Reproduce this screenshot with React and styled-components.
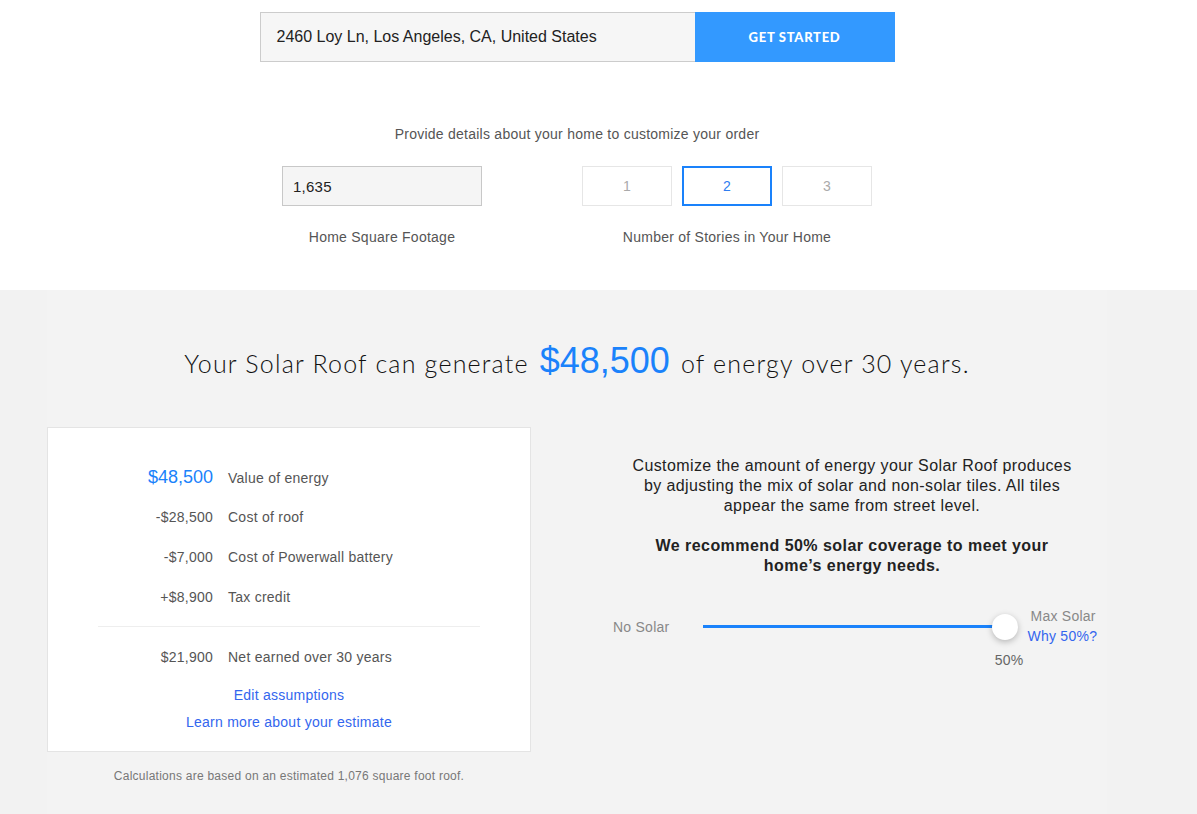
import React from "react";
import styled, { createGlobalStyle } from "styled-components";

const Global = createGlobalStyle`
  html, body { margin: 0; padding: 0; background: #f2f2f2; }
  body { font-family: "Liberation Sans", Arial, sans-serif; color: #333; letter-spacing: 0.25px; }
  * { box-sizing: border-box; }
`;

const Top = styled.section`
  background: #fff;
  height: 290px;
`;

const Frame = styled.div`
  width: 1154px;
  display: flex;
  flex-direction: column;
  align-items: center;
`;

const AddressBar = styled.div`
  display: flex;
  margin-top: 12px;
`;

const AddressInput = styled.div`
  width: 435px;
  height: 50px;
  background: #f6f6f6;
  border: 1px solid #cccccc;
  border-right: none;
  display: flex;
  align-items: center;
  padding-left: 16px;
  font-size: 16px;
  letter-spacing: 0;
  color: #222;
`;

const StartButton = styled.button`
  width: 200px;
  height: 50px;
  border: none;
  background: #3399ff;
  color: #fff;
  font-family: "Lato", sans-serif;
  font-weight: 900;
  font-size: 13px;
  letter-spacing: 0.7px;
`;

const Prompt = styled.p`
  margin: 64px 0 0;
  font-size: 14px;
  color: #555;
`;

const Fields = styled.div`
  display: flex;
  gap: 100px;
  margin-top: 24px;
`;

const Field = styled.div`
  display: flex;
  flex-direction: column;
  align-items: center;
`;

const FootageBox = styled.div`
  width: 200px;
  height: 40px;
  background: #f5f5f5;
  border: 1px solid #c8c8c8;
  display: flex;
  align-items: center;
  padding-left: 10px;
  font-size: 15px;
  color: #222;
`;

const Stories = styled.div`
  display: flex;
  gap: 10px;
`;

const Story = styled.div`
  width: 90px;
  height: 40px;
  background: #fff;
  border: ${(p) => (p.$active ? "2px solid #1a82fb" : "1px solid #e6e6e6")};
  color: ${(p) => (p.$active ? "#2f7df0" : "#aaa")};
  display: flex;
  align-items: center;
  justify-content: center;
  font-size: 14px;
`;

const FieldLabel = styled.div`
  margin-top: 23px;
  font-size: 14px;
  color: #555;
`;

const Bottom = styled.section`
  background: #f2f2f2;
  min-height: 524px;
`;

const Panel = styled.div`
  margin-left: 47px;
  width: 1060px;
  min-height: 524px;
  background: #f3f3f3;
  display: flex;
  flex-direction: column;
  align-items: center;
`;

const Headline = styled.h1`
  margin: 50px 0 0;
  font-family: "Lato", sans-serif;
  font-weight: 300;
  font-size: 25px;
  color: #111;
  display: flex;
  align-items: baseline;
  gap: 11px;
  letter-spacing: 1.2px;
`;

const Big = styled.span`
  font-family: "Liberation Sans", Arial, sans-serif;
  font-weight: 400;
  font-size: 36px;
  letter-spacing: 0;
  color: #1a82fb;
`;

const Columns = styled.div`
  align-self: stretch;
  display: flex;
  margin-top: 45px;
`;

const LeftCol = styled.div`
  width: 484px;
  display: flex;
  flex-direction: column;
  align-items: center;
`;

const Card = styled.div`
  width: 484px;
  height: 325px;
  background: #fff;
  border: 1px solid #e4e4e4;
  padding: 38px 50px 0;
  display: flex;
  flex-direction: column;
`;

const Row = styled.div`
  display: grid;
  grid-template-columns: 115px 1fr;
  column-gap: 15px;
  align-items: baseline;
  height: 40px;
  line-height: 20px;
  padding-top: 1px;
`;

const Amount = styled.span`
  text-align: right;
  font-size: ${(p) => (p.$hero ? "18px" : "14px")};
  letter-spacing: ${(p) => (p.$hero ? "0" : "0.25px")};
  color: ${(p) => (p.$hero ? "#1a82fb" : "#555")};
`;

const Label = styled.span`
  font-size: 14px;
  color: #555;
`;

const Divider = styled.hr`
  border: none;
  border-top: 1px solid #eee;
  margin: 0 0 19px;
  width: 382px;
  align-self: center;
`;

const Links = styled.div`
  display: flex;
  flex-direction: column;
  align-items: center;
  gap: 11px;
  margin-top: 1px;
`;

const Link = styled.a`
  font-size: 14px;
  color: #3366ee;
  text-decoration: none;
`;

const Note = styled.p`
  margin: 17px 0 0;
  font-size: 12px;
  color: #777;
`;

const RightCol = styled.div`
  margin-left: 66px;
  width: 510px;
  display: flex;
  flex-direction: column;
  align-items: center;
  text-align: center;
  padding-top: 29px;
`;

const Blurb = styled.p`
  margin: 0;
  font-size: 16px;
  line-height: 20px;
  letter-spacing: 0.4px;
  color: #222;
  max-width: 452px;
`;

const Recommend = styled(Blurb)`
  margin-top: 20px;
  font-weight: 700;
  letter-spacing: 0.45px;
  max-width: 420px;
`;

const SliderRow = styled.div`
  align-self: stretch;
  display: flex;
  align-items: center;
  margin-top: 33px;
  padding-left: 16px;
`;

const SideLabel = styled.span`
  font-size: 14px;
  color: #888;
`;

const TrackWrap = styled.div`
  position: relative;
  width: 302px;
  margin-left: 34px;
  height: 30px;
  display: flex;
  align-items: center;
`;

const Track = styled.div`
  width: 100%;
  height: 3px;
  background: #1a82fb;
`;

const Thumb = styled.div`
  position: absolute;
  right: -13px;
  top: 2px;
  width: 26px;
  height: 26px;
  border-radius: 50%;
  background: #fff;
  box-shadow: 0 2px 6px rgba(0, 0, 0, 0.25);
`;

const Value = styled.span`
  position: absolute;
  right: -18px;
  top: 40px;
  font-size: 14px;
  color: #666;
`;

const MaxBlock = styled.div`
  margin-left: 22px;
  display: flex;
  flex-direction: column;
  align-items: flex-start;
  gap: 4px;
  margin-top: -1px;
`;

const MaxLabel = styled(SideLabel)`
  margin-left: 3px;
`;

const rows = [
  ["$48,500", "Value of energy", true],
  ["-$28,500", "Cost of roof"],
  ["-$7,000", "Cost of Powerwall battery"],
  ["+$8,900", "Tax credit"],
];

export default function App() {
  return (
    <>
      <Global />
      <Top>
        <Frame>
          <AddressBar>
            <AddressInput>2460 Loy Ln, Los Angeles, CA, United States</AddressInput>
            <StartButton>GET STARTED</StartButton>
          </AddressBar>
          <Prompt>Provide details about your home to customize your order</Prompt>
          <Fields>
            <Field>
              <FootageBox>1,635</FootageBox>
              <FieldLabel>Home Square Footage</FieldLabel>
            </Field>
            <Field>
              <Stories>
                <Story>1</Story>
                <Story $active>2</Story>
                <Story>3</Story>
              </Stories>
              <FieldLabel>Number of Stories in Your Home</FieldLabel>
            </Field>
          </Fields>
        </Frame>
      </Top>
      <Bottom>
        <Panel>
          <Headline>
            <span>Your Solar Roof can generate</span>
            <Big>$48,500</Big>
            <span>of energy over 30 years.</span>
          </Headline>
          <Columns>
            <LeftCol>
              <Card>
                {rows.map(([a, l, hero]) => (
                  <Row key={l}>
                    <Amount $hero={hero}>{a}</Amount>
                    <Label>{l}</Label>
                  </Row>
                ))}
                <Divider />
                <Row>
                  <Amount>$21,900</Amount>
                  <Label>Net earned over 30 years</Label>
                </Row>
                <Links>
                  <Link href="#">Edit assumptions</Link>
                  <Link href="#">Learn more about your estimate</Link>
                </Links>
              </Card>
              <Note>Calculations are based on an estimated 1,076 square foot roof.</Note>
            </LeftCol>
            <RightCol>
              <Blurb>
                Customize the amount of energy your Solar Roof produces by adjusting the mix of
                solar and non-solar tiles. All tiles appear the same from street level.
              </Blurb>
              <Recommend>
                We recommend 50% solar coverage to meet your home’s energy needs.
              </Recommend>
              <SliderRow>
                <SideLabel>No Solar</SideLabel>
                <TrackWrap>
                  <Track />
                  <Thumb />
                  <Value>50%</Value>
                </TrackWrap>
                <MaxBlock>
                  <MaxLabel>Max Solar</MaxLabel>
                  <Link href="#">Why 50%?</Link>
                </MaxBlock>
              </SliderRow>
            </RightCol>
          </Columns>
        </Panel>
      </Bottom>
    </>
  );
}
